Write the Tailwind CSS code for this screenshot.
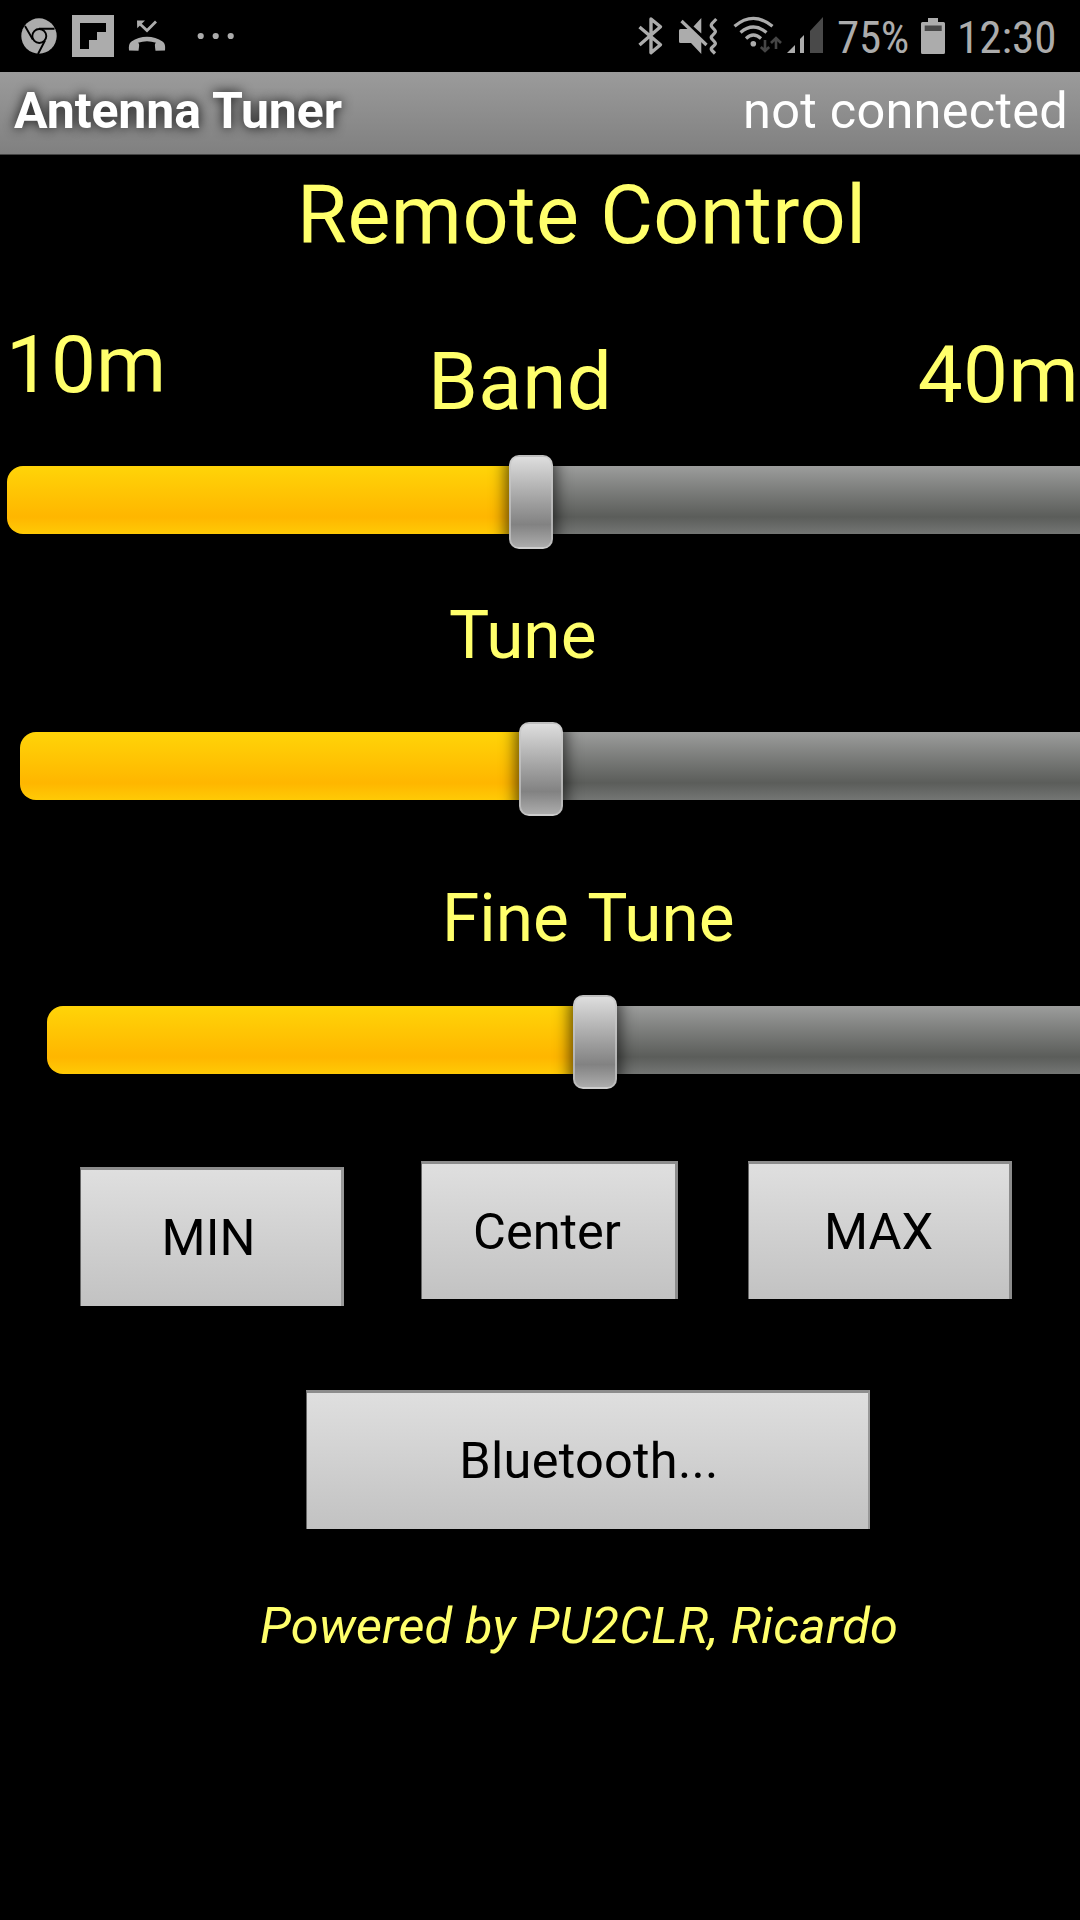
<!DOCTYPE html>
<html lang="en">
<head>
<meta charset="utf-8">
<title>Antenna Tuner</title>
<script src="https://cdn.jsdelivr.net/npm/@tailwindcss/browser@4"></script>
</head>
<body class="bg-black">
<div class="flex h-[1920px] w-[1080px] flex-col overflow-hidden bg-black font-[Roboto,sans-serif] whitespace-nowrap text-[#ffff6b]">

  <!-- Status bar -->
  <div class="flex h-[72px] shrink-0 items-start text-[#acacac]">
    <svg class="ml-[20px] h-[72px] w-[38px] shrink-0" viewBox="20 0 38 72" fill="none">
      <circle cx="39" cy="36" r="17.7" fill="currentColor"/>
      <g stroke="#000" stroke-width="1.9">
        <circle cx="39.3" cy="36" r="7"/>
        <path d="M39 28.8H54.5M25 26l7.8 13.5M45 40.5L38 54"/>
      </g>
    </svg>
    <svg class="ml-[14px] h-[72px] w-[42px] shrink-0" viewBox="72 0 42 72">
      <path d="M72 15h42v42H72z" fill="currentColor"/>
      <path d="M80 23h26v9h-9v8h-8v9h-9z" fill="#000"/>
    </svg>
    <svg class="ml-[14px] h-[72px] w-[38px] shrink-0" viewBox="128 0 38 72">
      <path d="M156 21.5L147 30.5L139.500 23.500" fill="none" stroke="currentColor" stroke-width="2.800"/>
      <path d="M137 20.500h8l-7.800 7.800z" fill="currentColor"/>
      <path d="M129 50.500C128.500 46 129 43.500 131.500 41.500C140 35 154 35 162.500 41.500C165 43.500 165.500 46 165 50.500L155.500 50.800L155 47C155 45.500 154.500 43.500 156 42.800C150 40.800 144 40.800 138 42.800C139.500 43.500 139.200 45.500 139 47L138.500 50.800Z" fill="currentColor"/>
    </svg>
    <svg class="ml-[30px] h-[72px] w-[40px] shrink-0" viewBox="196 0 40 72" fill="currentColor">
      <circle cx="200.700" cy="36" r="3.100"/><circle cx="215.700" cy="36" r="3.100"/><circle cx="230.700" cy="36" r="3.100"/>
    </svg>

    <svg class="ml-[402px] h-[72px] w-[26px] shrink-0" viewBox="638 0 26 72" fill="none" stroke="currentColor" stroke-width="3.400" stroke-linejoin="round">
      <path d="M639.500 27L660.500 44.700L651 52.700V19L660.500 26.700L639.500 45"/>
    </svg>
    <svg class="ml-[14px] h-[72px] w-[40px] shrink-0" viewBox="678 0 40 72" fill="none">
      <path d="M680.500 29H689L701.300 41V54L691 43H680.500Q679 43 679 41.500V30.500Q679 29 680.500 29zM701.300 18V33.500L693.500 26.500z" fill="currentColor"/>
      <path d="M681.500 21L706.500 45" stroke="currentColor" stroke-width="3.200"/>
      <path d="M716.300 19L712 23.500Q710.500 25.300 712 27L714.700 30Q716 31.500 714.700 33L712 36Q710.500 37.500 712 39L714.700 42Q716 43.500 714.700 45L712 47.500Q710.500 49 712 50.500L715 53.500" stroke="currentColor" stroke-width="3.200"/>
    </svg>
    <svg class="ml-[15px] h-[72px] w-[50px] shrink-0" viewBox="733 0 50 72" fill="none">
      <g stroke="currentColor" stroke-width="3.200">
        <path d="M734.500 26.300Q753.300 10.500 772.500 26.300"/>
        <path d="M740.500 32.500Q753.300 21.500 766.500 32.500"/>
        <path d="M746 38.500Q753.300 31.500 761 38.500"/>
      </g>
      <circle cx="753.300" cy="43.700" r="2.800" fill="currentColor"/>
      <path d="M765 40V51M760.800 47L765 51L769.200 47M776 49V38.500M771 43L776 38L781 43" stroke="#454545" stroke-width="2.600"/>
    </svg>
    <svg class="ml-[3px] h-[72px] w-[38px] shrink-0" viewBox="786 0 38 72">
      <path d="M787 53h8v-8zM800 53h4V35l-4 4z" fill="currentColor"/>
      <path d="M810 53h13V17L810 31z" fill="#494949"/>
    </svg>
    <span class="ml-[13px] w-[80px] pt-[2px] font-['Roboto_Condensed',Roboto,sans-serif] text-[45px] leading-[72px] tracking-[-0.3px]">75%</span>
    <svg class="ml-[3px] h-[72px] w-[26px] shrink-0" viewBox="920 0 26 72">
      <path d="M928 18h10v4h5.500q1.500 0 1.500 1.500v29q0 1.500-1.500 1.500h-21q-1.500 0-1.500-1.500v-29q0-1.500 1.500-1.500h5.500z" fill="currentColor"/>
      <path d="M924.700 25.500h17v5.500h-17z" fill="#494949"/>
    </svg>
    <span class="ml-[11px] pt-[2px] font-['Roboto_Condensed',Roboto,sans-serif] text-[45px] leading-[72px]">12:30</span>
  </div>

  <!-- Title bar -->
  <header class="flex h-[83px] shrink-0 items-center justify-between border-b border-[#444] bg-linear-to-b from-[#9b9b9b] to-[#808080] pr-[12px] pb-[4px] pl-[14px] text-white">
    <h1 class="text-[50px] leading-[70px] font-bold tracking-[-0.1px] [text-shadow:0_0_12px_rgba(0,0,0,0.9)]">Antenna Tuner</h1>
    <span class="text-[50.500px] leading-[70px] tracking-[0.25px]">not connected</span>
  </header>

  <main class="flex flex-col">
    <h2 class="pt-[1px] pl-[297px] text-[81px] leading-[119px] tracking-[0.5px]">Remote Control</h2>

    <div class="flex h-[180px] items-start text-[80px] leading-[90px]">
      <span class="mt-[45px] ml-[6px] w-[162px]">10m</span>
      <span class="mt-[62px] ml-[260px] tracking-[0.4px]">Band</span>
      <span class="mt-[55px] mr-px ml-auto tracking-[0.4px]">40m</span>
    </div>

    <div class="flex h-[94px] items-start pl-[7px]">
      <div class="mt-[10.500px] h-[68px] w-[502px] rounded-l-[16px] bg-linear-to-b from-[#ffd408] via-[#ffb600] via-75% to-[#ffca05]"></div>
      <div class="z-10 h-[94px] w-[44px] rounded-[10px] border-2 border-[#c6c6c6]/70 bg-linear-to-b from-[#dedede] via-[#828282] via-75% to-[#acacac] shadow-[0_0_16px_3px_rgba(0,0,0,0.65)]"></div>
      <div class="mt-[10.500px] h-[68px] flex-1 bg-linear-to-b from-[#9c9d9c] via-[#5b5d5a] via-75% to-[#747674]"></div>
    </div>

    <div class="mt-[41px] pl-[449px] text-[67.500px] leading-[90px]">Tune</div>

    <div class="mt-[42px] flex h-[94px] items-start pl-[20px]">
      <div class="mt-[10px] h-[68px] w-[499px] rounded-l-[16px] bg-linear-to-b from-[#ffd408] via-[#ffb600] via-75% to-[#ffca05]"></div>
      <div class="z-10 h-[94px] w-[44px] rounded-[10px] border-2 border-[#c6c6c6]/70 bg-linear-to-b from-[#dedede] via-[#828282] via-75% to-[#acacac] shadow-[0_0_16px_3px_rgba(0,0,0,0.65)]"></div>
      <div class="mt-[10px] h-[68px] flex-1 bg-linear-to-b from-[#9c9d9c] via-[#5b5d5a] via-75% to-[#747674]"></div>
    </div>

    <div class="mt-[57px] pl-[442px] text-[67.500px] leading-[90px] [word-spacing:3px]">Fine Tune</div>

    <div class="mt-[32px] flex h-[94px] items-start pl-[47px]">
      <div class="mt-[10.500px] h-[68px] w-[526px] rounded-l-[16px] bg-linear-to-b from-[#ffd408] via-[#ffb600] via-75% to-[#ffca05]"></div>
      <div class="z-10 h-[94px] w-[44px] rounded-[10px] border-2 border-[#c6c6c6]/70 bg-linear-to-b from-[#dedede] via-[#828282] via-75% to-[#acacac] shadow-[0_0_16px_3px_rgba(0,0,0,0.65)]"></div>
      <div class="mt-[10.500px] h-[68px] flex-1 bg-linear-to-b from-[#9c9d9c] via-[#5b5d5a] via-75% to-[#747674]"></div>
    </div>

    <div class="mt-[72px] flex h-[145px] items-start pl-[80px] text-[50.500px] text-black">
      <button class="mt-[6px] h-[139px] w-[264px] border-t-3 border-r-3 border-l border-t-[#8c8c8c] border-r-[#999] border-l-[#666] bg-linear-to-b from-[#dfdfdf] to-[#c2c2c2] pr-[5px]">MIN</button>
      <button class="ml-[77px] h-[138px] w-[257px] border-t-3 border-r-3 border-l border-t-[#8c8c8c] border-r-[#8c8c8c] border-l-[#666] bg-linear-to-b from-[#dfdfdf] to-[#c2c2c2] pr-[3px]">Center</button>
      <button class="ml-[70px] h-[138px] w-[264px] border-t-3 border-r-3 border-l border-t-[#8c8c8c] border-r-[#8c8c8c] border-l-[#666] bg-linear-to-b from-[#dfdfdf] to-[#c2c2c2] pr-[1px]">MAX</button>
    </div>

    <button class="mt-[84px] ml-[306px] h-[139px] w-[564px] border-t-3 border-r-2 border-l border-t-[#8c8c8c] border-r-[#999] border-l-[#666] bg-linear-to-b from-[#dfdfdf] to-[#c2c2c2] pl-[3px] text-[50.500px] tracking-[0.25px] text-black">Bluetooth...</button>

    <p class="mt-[57px] pl-[260px] text-[50.500px] leading-[80px] tracking-[0.2px] italic">Powered by PU2CLR, Ricardo</p>
  </main>
</div>
</body>
</html>
